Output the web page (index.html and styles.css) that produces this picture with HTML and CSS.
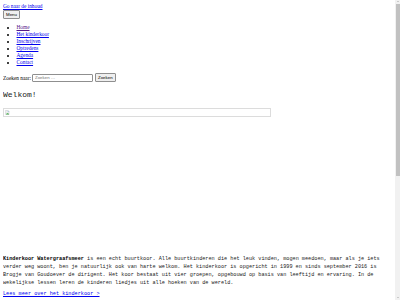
FILE: index.html
```html
<!DOCTYPE html>
<html lang="nl">
<head>
<meta charset="utf-8">
<title>Kinderkoor Watergraafsmeer</title>
<link rel="stylesheet" href="styles.css">
</head>
<body>
<a class="skip" href="#content">Go naar de inhoud</a>
<div class="menu-row"><button class="btn" type="button">Menu</button></div>
<ul class="nav">
  <li><a class="visited" href="#">Home</a></li>
  <li><a href="#">Het kinderkoor</a></li>
  <li><a href="#">Inschrijven</a></li>
  <li><a href="#">Optredens</a></li>
  <li><a href="#">Agenda</a></li>
  <li><a href="#">Contact</a></li>
</ul>
<form class="search">
  <label class="search-label">Zoeken naar:</label>
  <input class="search-input" type="text" placeholder="Zoeken …">
  <button class="btn" type="button">Zoeken</button>
</form>
<main id="content" class="content">
  <h2 class="title">Welkom!</h2>
  <div class="img-box">
    <svg class="broken" viewBox="0 0 16 16" width="5" height="5">
      <path d="M2 1h8l3 3v11H2z" fill="#f2f2f2" stroke="#9aa3ad"/>
      <path d="M3 14l4-5 3 3 2-2 1 4z" fill="#4caf50"/>
      <circle cx="10" cy="5" r="1.5" fill="#5b9bd5"/>
    </svg>
  </div>
  <div class="spacer"></div>
  <p class="intro"><strong>Kinderkoor Watergraafsmeer</strong> is een echt buurtkoor. Alle buurtkinderen die het leuk vinden, mogen meedoen, maar als je iets verder weg woont, ben je natuurlijk ook van harte welkom. Het kinderkoor is opgericht in 1999 en sinds september 2016 is Brogje van Goudoever de dirigent. Het koor bestaat uit vier groepen, opgebouwd op basis van leeftijd en ervaring. In de wekelijkse lessen leren de kinderen liedjes uit alle hoeken van de wereld.</p>
  <p class="more"><a href="#">Lees meer over het kinderkoor &gt;</a></p>
  <div class="tail"></div>
</main>
<div class="scrollbar" aria-hidden="true">
  <span class="arrow arrow-up"></span>
  <span class="thumb"></span>
  <span class="arrow arrow-down"></span>
</div>
</body>
</html>
```

FILE: styles.css
```css
html, body {
  background: #fff;
}
body {
  margin: 3px 8px 3px 3px;
  font-family: "Liberation Serif", serif;
  font-size: 5.33px;
  color: #000;
}
a {
  color: #0000ee;
}
a.visited {
  color: #551a8b;
}
.skip {
  display: inline-block;
  line-height: 7px;
}
.menu-row {
  line-height: 0;
}
.btn {
  font-family: "Liberation Sans", sans-serif;
  font-size: 4.4px;
  line-height: 5px;
  padding: 1px 2px;
  margin: 0;
  border: 1px solid #8f8f8f;
  border-radius: 1px;
  background: #efefef;
  color: #000;
}
.nav {
  margin: 5px 0 7px;
  padding-left: 13.5px;
  line-height: 7px;
}
.search {
  display: flex;
  align-items: center;
  gap: 1px;
  margin: 0;
}
.search-input {
  width: 55px;
  height: 6px;
  padding: 0 2px;
  margin: 0 1px 0 0;
  border: 1px solid #8f8f8f;
  border-radius: 1px;
  font-family: "Liberation Sans", sans-serif;
  font-size: 4.4px;
}
.search-input::placeholder {
  color: #757575;
}
.content {
  font-family: "Liberation Mono", monospace;
  color: #222;
}
.title {
  font-size: 8px;
  font-weight: normal;
  line-height: 12px;
  margin: 7px 0 7px;
}
.img-box {
  width: 265px;
  height: 7px;
  border: 1px solid #dcdcdc;
  display: flex;
  align-items: center;
  padding-left: 1px;
}
.spacer {
  height: 138px;
}
.intro {
  font-size: 5.2px;
  line-height: 8px;
  margin: 0;
}
.intro strong {
  color: #000;
}
.more {
  font-size: 5.2px;
  line-height: 8px;
  margin: 3px 0 0;
}
.tail {
  height: 200px;
}
.scrollbar {
  position: fixed;
  top: 0;
  right: 0;
  width: 5px;
  height: 100%;
  background: #f1f1f1;
  display: flex;
  flex-direction: column;
  align-items: center;
}
.thumb {
  width: 4px;
  height: 172px;
  margin-top: 2px;
  background: #c1c1c1;
}
.arrow {
  width: 0;
  height: 0;
  border-left: 1.5px solid transparent;
  border-right: 1.5px solid transparent;
}
.arrow-up {
  margin-top: 1px;
  border-bottom: 1.5px solid #a3a3a3;
}
.arrow-down {
  margin-top: auto;
  margin-bottom: 2px;
  border-top: 1.5px solid #a3a3a3;
}
```
